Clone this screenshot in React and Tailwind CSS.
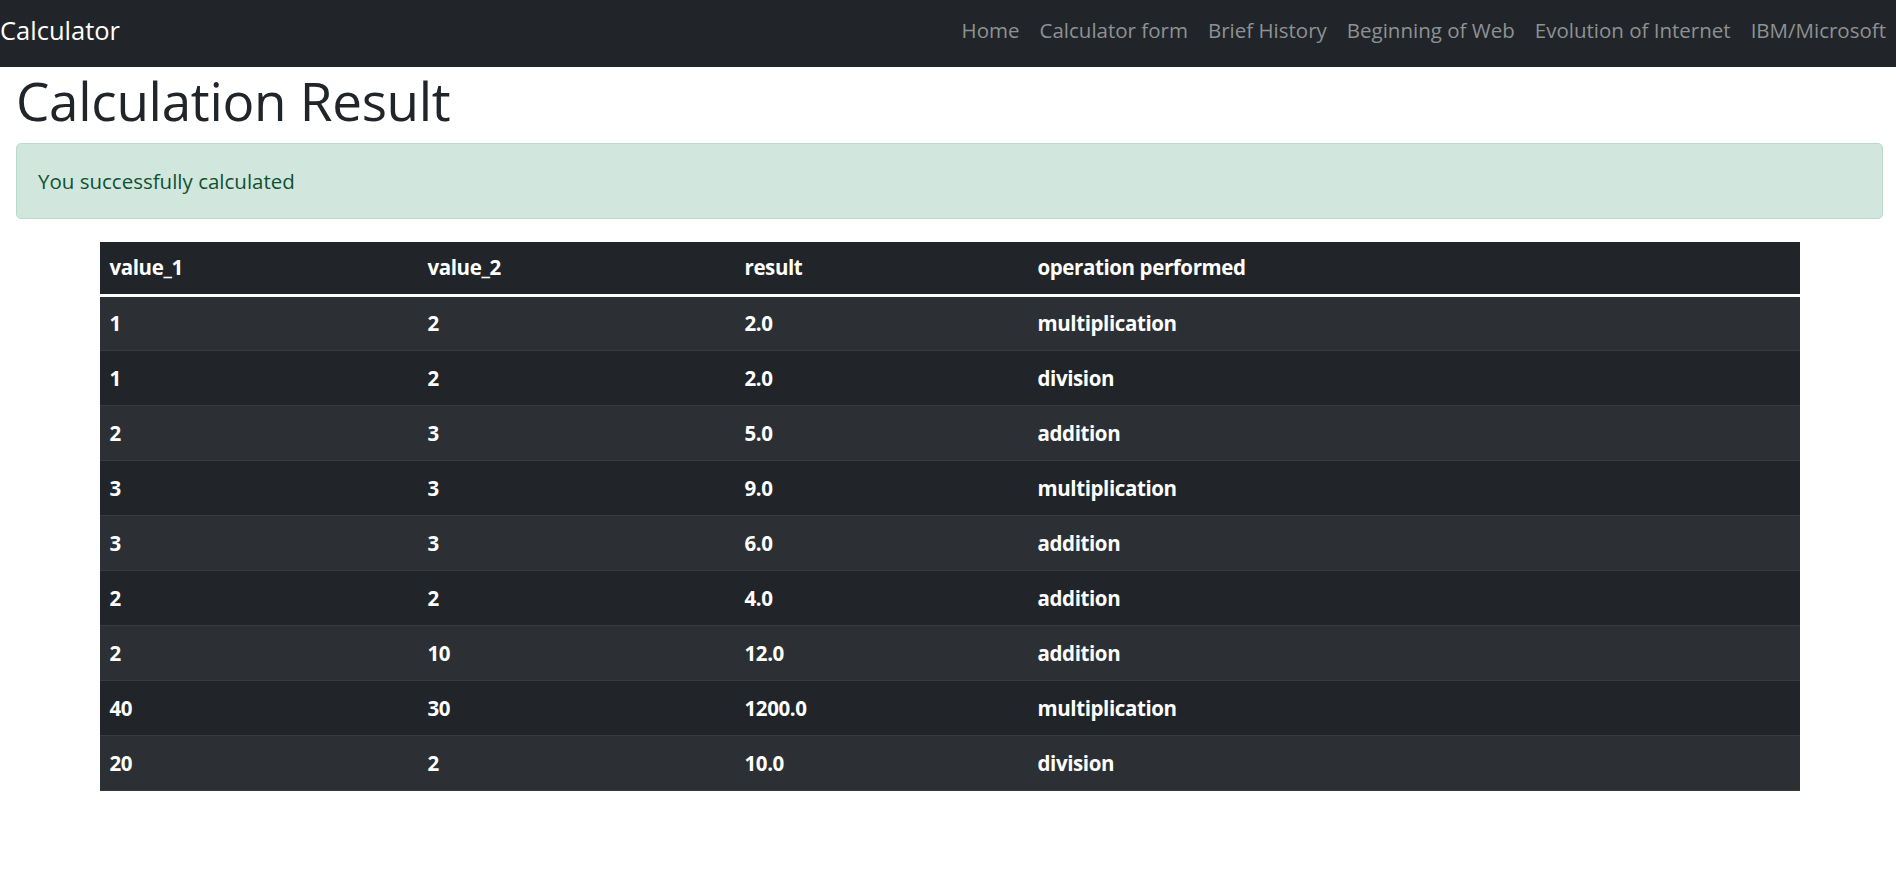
import React from 'react';

const links = ['Home', 'Calculator form', 'Brief History', 'Beginning of Web', 'Evolution of Internet', 'IBM/Microsoft'];

const rows = [
  ['1', '2', '2.0', 'multiplication'],
  ['1', '2', '2.0', 'division'],
  ['2', '3', '5.0', 'addition'],
  ['3', '3', '9.0', 'multiplication'],
  ['3', '3', '6.0', 'addition'],
  ['2', '2', '4.0', 'addition'],
  ['2', '10', '12.0', 'addition'],
  ['40', '30', '1200.0', 'multiplication'],
  ['20', '2', '10.0', 'division'],
];

const App = () => {
  return (
    <div className="min-h-[870px] bg-white font-['Open_Sans','Noto_Sans',sans-serif] text-[#212529]">
      {/* barre de navigation */}
      <nav className="h-[67px] bg-[#212529] flex items-center justify-between pb-[6px]">
        <a className="text-white text-[25.5px] leading-none">Calculator</a>
        <ul className="flex items-center">
          {links.map((l) => (
            <li key={l} className="px-[10px] text-[20.5px] text-[#8e9194]">{l}</li>
          ))}
        </ul>
      </nav>

      <div className="pl-4 pr-[13px]">
        <h1 className="text-[53px] leading-[1.2] font-medium pt-[2px] mb-[10px] tracking-[-0.3px]">Calculation Result</h1>

        {/* message de succès */}
        <div className="border border-[#badbcc] bg-[#d1e7dd] text-[#0f5132] rounded-[5px] px-[21px] py-[21px] text-[20.5px] leading-[32px]">
          You successfully calculated
        </div>

        {/* tableau des calculs */}
        <table className="w-[1700px] mx-auto mt-[23px] border-collapse bg-[#212529] text-white font-bold text-[20.5px] tracking-[-0.4px]">
          <thead>
            <tr className="border-b-[3px] border-white">
              <th className="w-[318px] text-left px-[10px] h-[54px]">value_1</th>
              <th className="w-[317px] text-left px-[10px] h-[54px]">value_2</th>
              <th className="w-[293px] text-left px-[10px] h-[54px]">result</th>
              <th className="text-left px-[10px] h-[54px]">operation performed</th>
            </tr>
          </thead>
          <tbody>
            {rows.map((r, i) => (
              <tr key={i} className={`border-b border-[#373b3e] ${i % 2 === 0 ? 'bg-[#2c3034]' : 'bg-[#212529]'}`}>
                {r.map((c, j) => (
                  <td key={j} className="px-[10px] h-[55px]">{c}</td>
                ))}
              </tr>
            ))}
          </tbody>
        </table>
      </div>
    </div>
  );
};

export default App;
